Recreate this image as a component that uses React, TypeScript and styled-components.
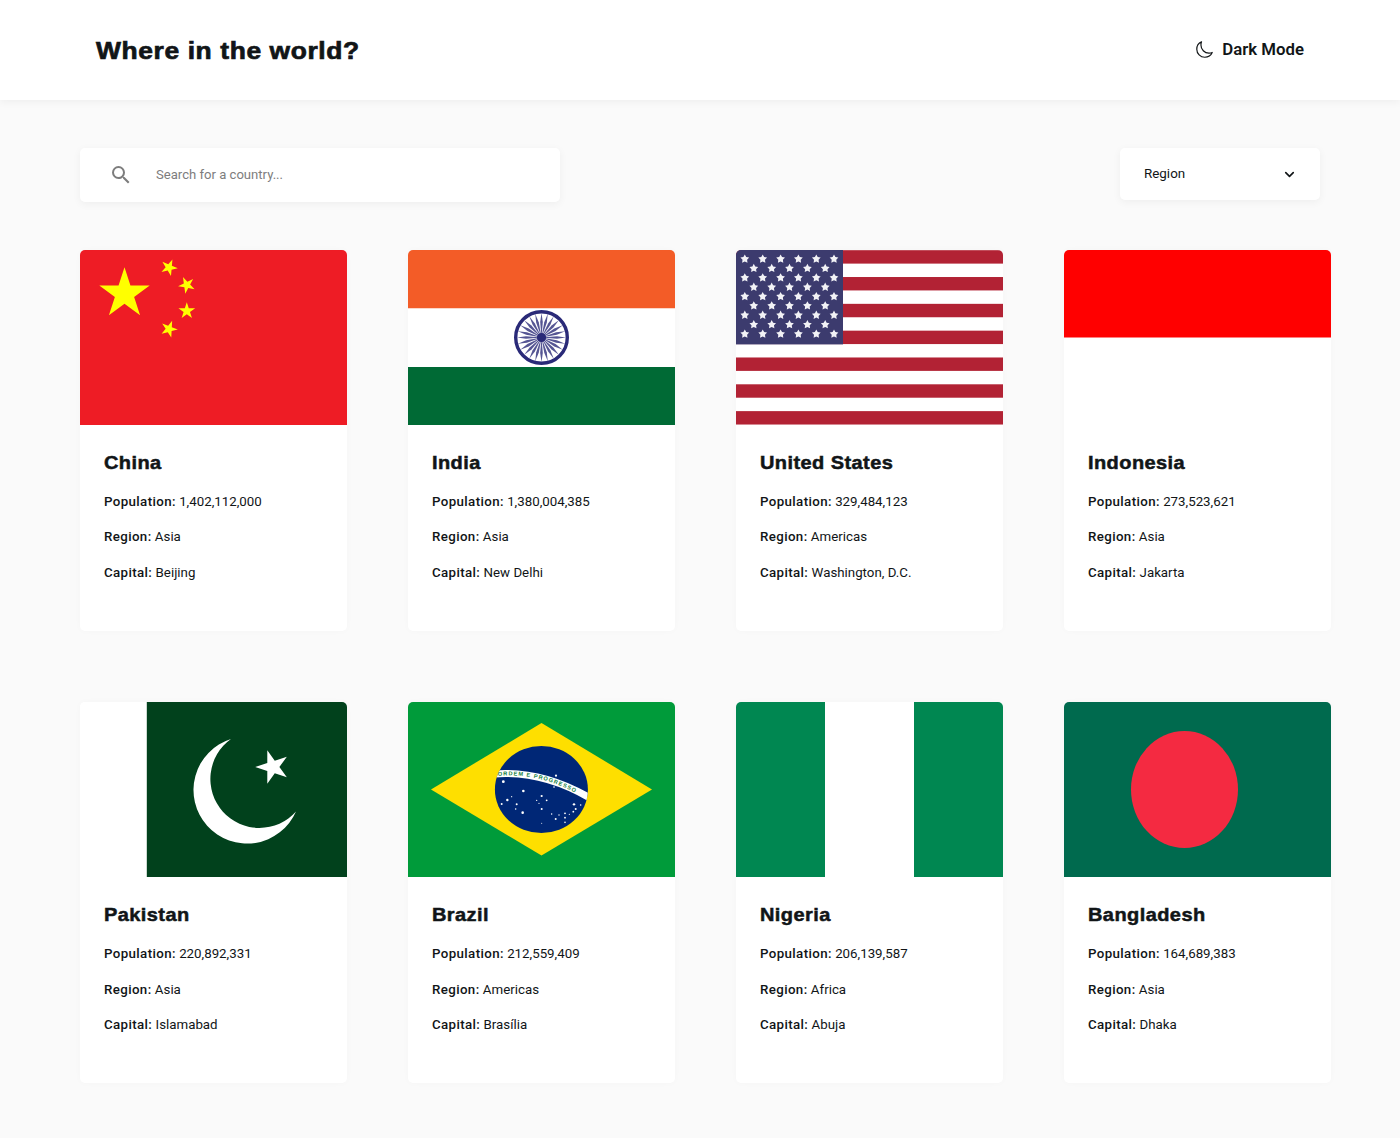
import React from "react";
import styled, { createGlobalStyle } from "styled-components";
import { ChevronDown } from "lucide-react";
import { IoMoonOutline } from "react-icons/io5";
import { MdSearch } from "react-icons/md";

const Global = createGlobalStyle`
  html, body { margin: 0; padding: 0; background: #fafafa; }
  * { box-sizing: border-box; }
  body { font-family: Roboto, "Liberation Sans", sans-serif; color: #111517; }
`;

const Page = styled.div`
  min-height: 1138px;
  background: #fafafa;
`;
const Header = styled.header`
  height: 100px;
  background: #fff;
  box-shadow: 0 2px 8px rgba(0, 0, 0, 0.05);
  display: flex;
  align-items: center;
  justify-content: space-between;
  padding: 0 96px;
`;
const Title = styled.h1`
  margin: 2px 0 0;
  font: 700 24px "Liberation Sans", sans-serif;
  letter-spacing: 0.55px;
  -webkit-text-stroke: 0.7px #111517;
  color: #111517;
  transform: scaleX(1.1);
  transform-origin: left center;
`;
const ThemeToggle = styled.button`
  display: flex;
  align-items: center;
  gap: 8px;
  border: 0;
  padding: 0 0 2px;
  background: none;
  color: #111517;
  font: 600 16.8px Roboto, sans-serif;
`;
const Main = styled.main`
  padding: 48px 0 0 80px;
`;
const Filters = styled.div`
  width: 1240px;
  display: flex;
  justify-content: space-between;
  align-items: flex-start;
  margin-bottom: 48px;
`;
const SearchBox = styled.label`
  width: 480px;
  height: 54px;
  background: #fff;
  border-radius: 5px;
  box-shadow: 0 2px 9px rgba(0, 0, 0, 0.05);
  display: flex;
  align-items: center;
  gap: 21px;
  padding-left: 29px;
  color: #7d7d7d;
`;
const SearchInput = styled.input`
  flex: 1;
  border: 0;
  outline: 0;
  background: none;
  margin-bottom: 2px;
  font: 400 13.1px Roboto, sans-serif;
  &::placeholder { color: #7d7d7d; opacity: 1; }
`;
const RegionSelect = styled.div`
  width: 200px;
  height: 52px;
  background: #fff;
  border-radius: 5px;
  box-shadow: 0 2px 9px rgba(0, 0, 0, 0.05);
  display: flex;
  align-items: center;
  justify-content: space-between;
  padding: 0 23px 2px 24px;
  font-size: 13.4px;
  color: #111517;
`;
const Chevron = styled(ChevronDown)`
  margin-top: 2px;
`;
const Grid = styled.div`
  display: grid;
  grid-template-columns: repeat(4, 267px);
  column-gap: 61px;
  row-gap: 71.6px;
`;
const Card = styled.article`
  height: 380.8px;
  background: #fff;
  border-radius: 5px;
  overflow: hidden;
  box-shadow: 0 0 7px rgba(0, 0, 0, 0.025);
`;
const FlagSvg = styled.svg`
  display: block;
  width: 267px;
  height: 175px;
`;
const CardBody = styled.div`
  padding: 27px 24px 0;
`;
const CountryName = styled.h2`
  margin: 0 0 19.7px;
  font: 700 18.5px/22px "Liberation Sans", sans-serif;
  letter-spacing: 0.4px;
  -webkit-text-stroke: 0.5px #111517;
  transform: scaleX(1.08);
  transform-origin: left center;
`;
const Fact = styled.p`
  margin: 0 0 19px;
  font-size: 13.3px;
  line-height: 16.5px;
  b { font-weight: 500; letter-spacing: 0.38px; }
`;

function starPoints(cx: number, cy: number, r: number, rot = 0, inner = 0.382) {
  const pts: string[] = [];
  for (let i = 0; i < 10; i++) {
    const a = ((-90 + rot + i * 36) * Math.PI) / 180;
    const rr = i % 2 ? r * inner : r;
    pts.push(`${(cx + rr * Math.cos(a)).toFixed(2)},${(cy + rr * Math.sin(a)).toFixed(2)}`);
  }
  return pts.join(" ");
}

const China = () => (
  <FlagSvg viewBox="0 0 267 175">
    <rect width="267" height="175" fill="#ee1c25" />
    <polygon points={starPoints(44.5, 43.75, 26.5)} fill="#ff0" />
    <polygon points={starPoints(89, 17.5, 8.8, 23)} fill="#ff0" />
    <polygon points={starPoints(106.8, 35, 8.8, 46)} fill="#ff0" />
    <polygon points={starPoints(106.8, 61, 8.8, 0)} fill="#ff0" />
    <polygon points={starPoints(89, 79, 8.8, 21)} fill="#ff0" />
  </FlagSvg>
);

const India = () => (
  <FlagSvg viewBox="0 0 267 175">
    <rect width="267" height="58.5" fill="#f35c27" />
    <rect y="58.5" width="267" height="58.5" fill="#fff" />
    <rect y="117" width="267" height="58" fill="#006a35" />
    <circle cx="133.5" cy="87.5" r="25.8" fill="none" stroke="#2a2a78" strokeWidth="3.4" />
    {Array.from({ length: 24 }, (_, i) => (
      <path key={i} d="M133.5 87.5 L132.2 72 L133.5 63 L134.8 72 Z" fill="#2a2a78" opacity="0.8" transform={`rotate(${i * 15} 133.5 87.5)`} />
    ))}
    <circle cx="133.5" cy="87.5" r="4.6" fill="#2a2a78" />
  </FlagSvg>
);

const Usa = () => {
  const h = 175 / 13.05;
  const cols = [8.8, 26.7, 44.6, 62.4, 80.3, 98];
  const cols2 = [17.8, 35.7, 53.5, 71.4, 89.2];
  const rows = [9, 27.8, 46.5, 65.2, 84];
  const rows2 = [18.4, 37.2, 55.8, 74.6];
  return (
    <FlagSvg viewBox="0 0 267 175">
      <rect width="267" height="175" fill="#fff" />
      {Array.from({ length: 7 }, (_, i) => (
        <rect key={i} y={i * 2 * h + 0.2} width="267" height={h} fill="#b22234" />
      ))}
      <rect width="107" height="94.4" fill="#3c3b6e" />
      {rows.flatMap((y) => cols.map((x) => <polygon key={`${x}-${y}`} points={starPoints(x, y, 4.6, 0, 0.52)} fill="#f2f2f6" />))}
      {rows2.flatMap((y) => cols2.map((x) => <polygon key={`${x}-${y}`} points={starPoints(x, y, 4.6, 0, 0.52)} fill="#f2f2f6" />))}
    </FlagSvg>
  );
};

const Indonesia = () => (
  <FlagSvg viewBox="0 0 267 175">
    <rect width="267" height="175" fill="#fff" />
    <rect width="267" height="87.5" fill="#f00" />
  </FlagSvg>
);

const Pakistan = () => (
  <FlagSvg viewBox="0 0 267 175">
    <rect width="267" height="175" fill="#fff" />
    <rect x="66.8" width="200.2" height="175" fill="#01411c" />
    <path d="M151 37 A53.5 53.5 0 1 0 216 109.5 A49 49 0 1 1 151 37 Z" fill="#fff" />
    <polygon points={starPoints(192.7, 65, 17.5, -18)} fill="#fff" />
  </FlagSvg>
);

const brazilStars: [number, number, number][] = [
  [55,140,1.4],[115,168,1.3],[67,195,1.2],[80,185,.6],[50,207,1],[95,208,1],[92,222,.8],[113,233,1.3],[170,183,1.1],[155,196,.7],[185,196,.9],[162,205,.6],[170,222,1],[213,122,1.1],[207,156,.8],[200,237,.7],[222,240,.7],[212,252,1],[240,235,.9],[240,248,.9],[240,262,.8],[253,238,.6],[265,230,.9],[272,222,1],[267,208,1.2],[287,210,.8],[170,265,.5],
];

const Brazil = () => (
  <FlagSvg viewBox="0 0 267 175">
    <defs>
      <clipPath id="globe"><ellipse cx="133.4" cy="87.5" rx="46.5" ry="43.5" /></clipPath>
      <path id="motto" d="M90 74 Q134 69.5 180 98" fill="none" />
    </defs>
    <rect width="267" height="175" fill="#009b3a" />
    <polygon points="23,87.5 133.5,21 244,87.5 133.5,153.5" fill="#fedf00" />
    <ellipse cx="133.4" cy="87.5" rx="46.5" ry="43.5" fill="#002776" />
    <g clipPath="url(#globe)">
      <path d="M85 72 Q133.5 67.8 182 96" fill="none" stroke="#fff" strokeWidth="7" />
    </g>
    {brazilStars.map(([x, y, r]) => (
      <circle key={`${x}-${y}`} cx={x / 3 + 77} cy={y / 3 + 33} r={r} fill="#fff" />
    ))}
    <text fontFamily="Liberation Sans, sans-serif" fontSize="5.6" fontWeight="700" fill="#16813f" letterSpacing="1">
      <textPath href="#motto">ORDEM E PROGRESSO</textPath>
    </text>
  </FlagSvg>
);

const Nigeria = () => (
  <FlagSvg viewBox="0 0 267 175">
    <rect width="267" height="175" fill="#008751" />
    <rect x="89" width="89" height="175" fill="#fff" />
  </FlagSvg>
);

const Bangladesh = () => (
  <FlagSvg viewBox="0 0 267 175">
    <rect width="267" height="175" fill="#006a4e" />
    <ellipse cx="120.5" cy="87.5" rx="53.5" ry="58.5" fill="#f42a41" />
  </FlagSvg>
);

const countries = [
  { name: "China", population: "1,402,112,000", region: "Asia", capital: "Beijing", Flag: China },
  { name: "India", population: "1,380,004,385", region: "Asia", capital: "New Delhi", Flag: India },
  { name: "United States", population: "329,484,123", region: "Americas", capital: "Washington, D.C.", Flag: Usa },
  { name: "Indonesia", population: "273,523,621", region: "Asia", capital: "Jakarta", Flag: Indonesia },
  { name: "Pakistan", population: "220,892,331", region: "Asia", capital: "Islamabad", Flag: Pakistan },
  { name: "Brazil", population: "212,559,409", region: "Americas", capital: "Brasília", Flag: Brazil },
  { name: "Nigeria", population: "206,139,587", region: "Africa", capital: "Abuja", Flag: Nigeria },
  { name: "Bangladesh", population: "164,689,383", region: "Asia", capital: "Dhaka", Flag: Bangladesh },
];

export default function App() {
  return (
    <Page>
      <Global />
      <Header>
        <Title>Where in the world?</Title>
        <ThemeToggle>
          <IoMoonOutline size={19} />
          Dark Mode
        </ThemeToggle>
      </Header>
      <Main>
        <Filters>
          <SearchBox>
            <MdSearch size={24} />
            <SearchInput placeholder="Search for a country..." />
          </SearchBox>
          <RegionSelect>
            Region
            <Chevron size={15} strokeWidth={2.6} />
          </RegionSelect>
        </Filters>
        <Grid>
          {countries.map(({ name, population, region, capital, Flag }) => (
            <Card key={name}>
              <Flag />
              <CardBody>
                <CountryName>{name}</CountryName>
                <Fact><b>Population:</b> {population}</Fact>
                <Fact><b>Region:</b> {region}</Fact>
                <Fact><b>Capital:</b> {capital}</Fact>
              </CardBody>
            </Card>
          ))}
        </Grid>
      </Main>
    </Page>
  );
}
